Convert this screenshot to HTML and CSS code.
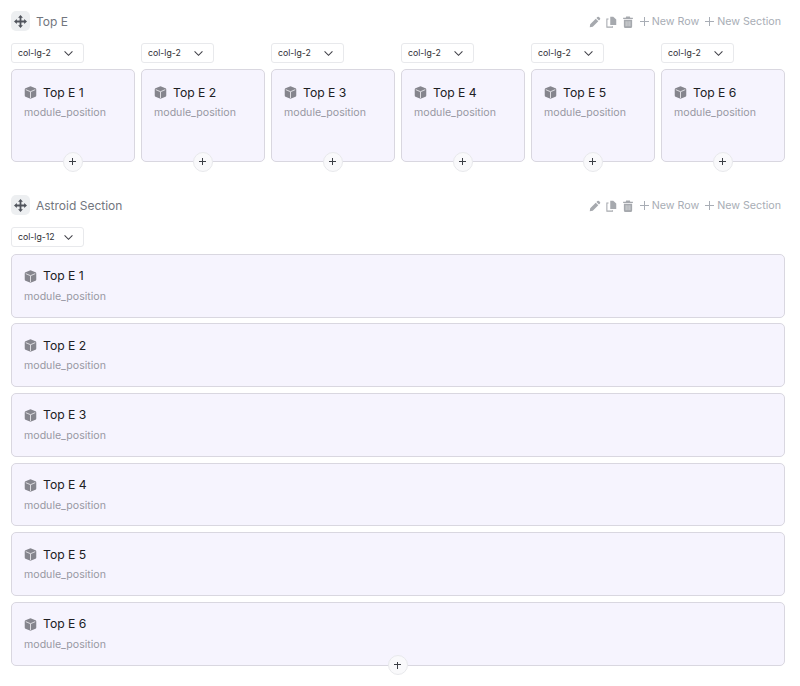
FILE: index.html
```html
<!DOCTYPE html>
<html lang="en">
<head>
<meta charset="utf-8">
<title>Layout builder</title>
<link rel="stylesheet" href="styles.css">
</head>
<body>
<svg class="defs" width="0" height="0" aria-hidden="true">
  <symbol id="i-cube" viewBox="0 0 16 16"><path d="M8 .4 14.200 2.900a1.500 1.500 0 0 1 .9 1.400v7.400a1.500 1.500 0 0 1-.9 1.400L8 15.600 1.800 13.100a1.500 1.500 0 0 1-.9-1.400V4.300a1.500 1.500 0 0 1 .9-1.400Z"/><path class="seam" d="M2.200 4.500 8 7l5.800-2.500M8 7v8"/></symbol>
  <symbol id="i-pencil" viewBox="0 0 16 16"><path d="M11.200 1.400a1.500 1.500 0 0 1 2.100 0l1.300 1.300a1.500 1.500 0 0 1 0 2.100L13.300 6.100 9.900 2.700Z M9 3.600 12.400 7 5 14.400 1 15l.6-4Z"/></symbol>
  <symbol id="i-copy" viewBox="0 0 16 16"><path d="M7 1h4l4 3.500V12H7Z"/><path class="hollow" d="M4.700 4H2.500v10.800H10V13.500"/></symbol>
  <symbol id="i-trash" viewBox="0 0 16 16"><path d="M5.500 .8h5l.5 1.400h3.500V4h-13V2.200H5Z M2.500 5h11v9a2 2 0 0 1-2 2h-7a2 2 0 0 1-2-2Z"/><path class="slot" d="M5.500 7v6.500M8 7v6.500M10.500 7v6.500"/></symbol>
  <symbol id="i-move" viewBox="0 0 16 16"><path d="M8 0 11 3.500H9.100V6.900H12.500V5L16 8 12.500 11V9.100H9.100V12.500H11L8 16 5 12.500H6.900V9.100H3.500V11L0 8 3.500 5V6.900H6.900V3.500H5Z"/></symbol>
  <symbol id="i-chevron" viewBox="0 0 12 8"><path d="M1.500 1.500 6 6l4.500-4.500"/></symbol>
</svg>

<section class="section first">
  <header class="section-head">
    <span class="drag"><svg class="ico-move"><use href="#i-move"/></svg></span>
    <h2 class="section-title">Top E</h2>
    <div class="actions">
      <svg class="act-ico"><use href="#i-pencil"/></svg>
      <svg class="act-ico"><use href="#i-copy"/></svg>
      <svg class="act-ico"><use href="#i-trash"/></svg>
      <span class="act-link"><span class="plus-line"></span>New Row</span>
      <span class="act-link"><span class="plus-line"></span>New Section</span>
    </div>
  </header>
  <div class="cols">
    <div class="col">
      <div class="select"><span>col-lg-2</span><svg class="chev"><use href="#i-chevron"/></svg></div>
      <div class="card tall">
        <div class="card-title"><svg class="cube"><use href="#i-cube"/></svg>Top E 1</div>
        <div class="card-sub">module_position</div>
        <button class="add" type="button"></button>
      </div>
    </div>
    <div class="col">
      <div class="select"><span>col-lg-2</span><svg class="chev"><use href="#i-chevron"/></svg></div>
      <div class="card tall">
        <div class="card-title"><svg class="cube"><use href="#i-cube"/></svg>Top E 2</div>
        <div class="card-sub">module_position</div>
        <button class="add" type="button"></button>
      </div>
    </div>
    <div class="col">
      <div class="select"><span>col-lg-2</span><svg class="chev"><use href="#i-chevron"/></svg></div>
      <div class="card tall">
        <div class="card-title"><svg class="cube"><use href="#i-cube"/></svg>Top E 3</div>
        <div class="card-sub">module_position</div>
        <button class="add" type="button"></button>
      </div>
    </div>
    <div class="col">
      <div class="select"><span>col-lg-2</span><svg class="chev"><use href="#i-chevron"/></svg></div>
      <div class="card tall">
        <div class="card-title"><svg class="cube"><use href="#i-cube"/></svg>Top E 4</div>
        <div class="card-sub">module_position</div>
        <button class="add" type="button"></button>
      </div>
    </div>
    <div class="col">
      <div class="select"><span>col-lg-2</span><svg class="chev"><use href="#i-chevron"/></svg></div>
      <div class="card tall">
        <div class="card-title"><svg class="cube"><use href="#i-cube"/></svg>Top E 5</div>
        <div class="card-sub">module_position</div>
        <button class="add" type="button"></button>
      </div>
    </div>
    <div class="col">
      <div class="select"><span>col-lg-2</span><svg class="chev"><use href="#i-chevron"/></svg></div>
      <div class="card tall">
        <div class="card-title"><svg class="cube"><use href="#i-cube"/></svg>Top E 6</div>
        <div class="card-sub">module_position</div>
        <button class="add" type="button"></button>
      </div>
    </div>
  </div>
</section>

<section class="section second">
  <header class="section-head">
    <span class="drag"><svg class="ico-move"><use href="#i-move"/></svg></span>
    <h2 class="section-title">Astroid Section</h2>
    <div class="actions">
      <svg class="act-ico"><use href="#i-pencil"/></svg>
      <svg class="act-ico"><use href="#i-copy"/></svg>
      <svg class="act-ico"><use href="#i-trash"/></svg>
      <span class="act-link"><span class="plus-line"></span>New Row</span>
      <span class="act-link"><span class="plus-line"></span>New Section</span>
    </div>
  </header>
  <div class="stack">
    <div class="select"><span>col-lg-12</span><svg class="chev"><use href="#i-chevron"/></svg></div>
    <div class="rows">
      <div class="card wide"><div class="card-title"><svg class="cube"><use href="#i-cube"/></svg>Top E 1</div><div class="card-sub">module_position</div></div>
      <div class="card wide"><div class="card-title"><svg class="cube"><use href="#i-cube"/></svg>Top E 2</div><div class="card-sub">module_position</div></div>
      <div class="card wide"><div class="card-title"><svg class="cube"><use href="#i-cube"/></svg>Top E 3</div><div class="card-sub">module_position</div></div>
      <div class="card wide"><div class="card-title"><svg class="cube"><use href="#i-cube"/></svg>Top E 4</div><div class="card-sub">module_position</div></div>
      <div class="card wide"><div class="card-title"><svg class="cube"><use href="#i-cube"/></svg>Top E 5</div><div class="card-sub">module_position</div></div>
      <div class="card wide"><div class="card-title"><svg class="cube"><use href="#i-cube"/></svg>Top E 6</div><div class="card-sub">module_position</div><button class="add" type="button"></button></div>
    </div>
  </div>
</section>
</body>
</html>
```

FILE: styles.css
```css
* { box-sizing: border-box; }
html, body { height: 100%; }
body {
  margin: 0;
  padding: 11px 15px 0 11px;
  background: #fff;
  font-family: Inter, "Liberation Sans", sans-serif;
  color: #1c1c22;
  overflow: hidden;
}
.defs { position: absolute; }
.section.second { margin-top: 33px; }

.section-head { display: flex; align-items: center; height: 20px; }
.drag {
  width: 19px; height: 20px; border-radius: 5px; background: #edeff1;
  display: flex; align-items: center; justify-content: center;
}
.ico-move { width: 13px; height: 13px; fill: #50545c; }
.section-title {
  margin: 1px 0 0 6px; font-size: 12px; font-weight: 400; line-height: 20px; color: #72767e;
}
.actions { margin-left: auto; display: flex; align-items: center; color: #a8adb5; font-size: 10.700px; padding: 1px 4px 0 0; }
.act-ico { width: 12px; height: 12px; margin-right: 4.500px; fill: #a6a9ae; }
.slot { fill: none; stroke: #e4e5e7; stroke-width: 1; }
.hollow { fill: none; stroke: #a6a9ae; stroke-width: 1.400; }
.act-link { display: flex; align-items: center; margin-left: 6px; white-space: nowrap; }
.act-ico + .act-link { margin-left: 1.500px; }
.plus-line { width: 9px; height: 9px; margin-right: 3px; background: linear-gradient(#a8adb5,#a8adb5) center/9px 1px no-repeat, linear-gradient(#a8adb5,#a8adb5) center/1px 9px no-repeat; }

.cols { display: grid; grid-template-columns: repeat(6, 124px); column-gap: 6px; margin-top: 12px; }
.col { display: flex; flex-direction: column; }
.stack { margin-top: 12px; }

.select {
  width: 73px; height: 20px; padding: 0 9px 0 6px; border: 1px solid #e8e9ec; border-radius: 3px;
  display: flex; align-items: center; justify-content: space-between;
  font-size: 8.700px; color: #2e2e33; background: #fff;
}
.chev { width: 11px; height: 7px; fill: none; stroke: #3f3f46; stroke-width: 1.200; }

.card {
  position: relative; background: #f6f4fe; border: 1px solid #d9d7e0; border-radius: 5px;
  padding: 13.500px 12px;
}
.card.tall { height: 93px; margin-top: 6px; padding-top: 14.500px; }
.rows { display: flex; flex-direction: column; gap: 5.800px; margin-top: 6.800px; }
.card.wide { height: 63.800px; }
.card-title { display: flex; align-items: center; font-size: 12.200px; line-height: 16px; color: #202024; }
.cube { width: 13px; height: 13px; margin-right: 6px; fill: #85858d; }
.seam { fill: none; stroke: #e6e5ea; stroke-width: 1.100; }
.card-sub { margin-top: 4.500px; font-size: 10.600px; line-height: 16px; color: #9898a3; }

.add {
  position: absolute; left: 50%; bottom: -10.500px; width: 20px; height: 20px; margin-left: -10.500px; padding: 0;
  border: 1px solid #e8e9ec; border-radius: 50%;
  background: linear-gradient(#3c3f46,#3c3f46) center/7px 1.300px no-repeat, linear-gradient(#3c3f46,#3c3f46) center/1.300px 7px no-repeat, #f9f9fb;
}
```
